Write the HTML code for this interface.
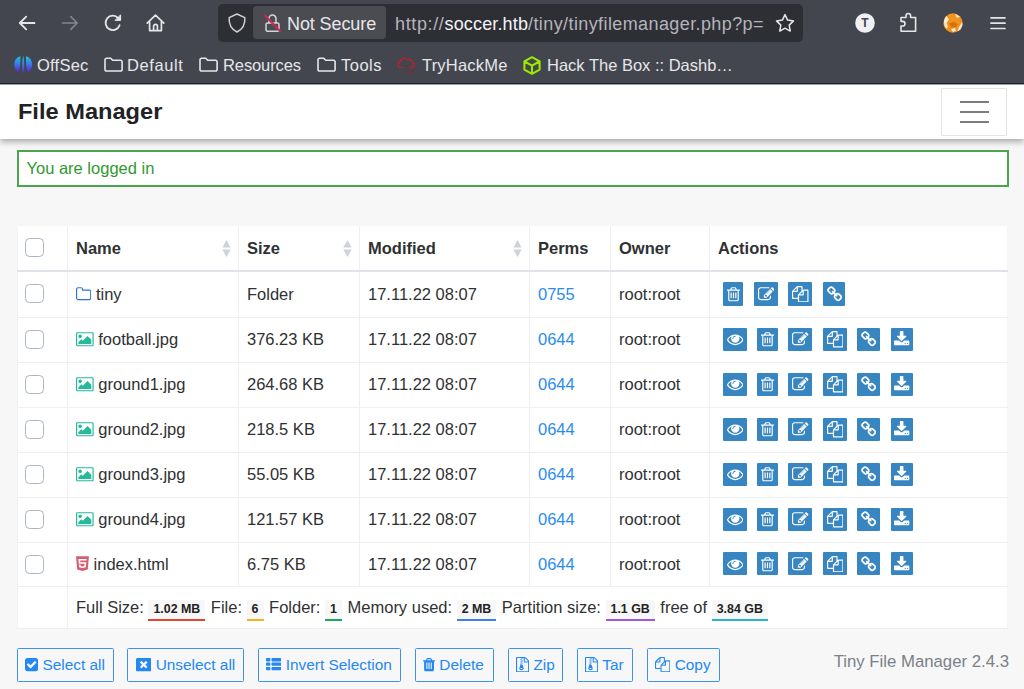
<!DOCTYPE html>
<html lang="en">
<head>
<meta charset="utf-8">
<title>Tiny File Manager</title>
<style>
*{box-sizing:border-box;margin:0;padding:0}
html,body{width:1024px;height:689px;overflow:hidden}
body{position:relative;background:#f7f7f7;font-family:"Liberation Sans",Arial,sans-serif;font-size:15px;color:#303133;line-height:1.5}
/* ---------- browser chrome ---------- */
#chrome{position:absolute;z-index:2;left:0;top:0;width:1024px;height:85px;background:linear-gradient(#43464e 0,#43464e 82.700px,#1e1f24 83.300px,#1e1f24 84.100px,#fff 84.800px);font-family:"Liberation Sans","DejaVu Sans",sans-serif;color:#e6e6ea}
#urlbar{position:absolute;left:218px;top:4px;width:585px;height:38px;border-radius:5px;background:#2e2f35}
#idbox{position:absolute;left:253px;top:6px;width:133px;height:33px;border-radius:4px;background:#4b4c52}
.ct{position:absolute;white-space:nowrap;font-size:18px;line-height:20px}
.bm{position:absolute;top:55px;white-space:nowrap;font-size:16.5px;line-height:20px;color:#e6e6ea}
#chrome svg{position:absolute;overflow:visible}
/* ---------- page ---------- */
#nav{position:absolute;left:0;top:84px;width:1024px;height:55px;background:#fff;box-shadow:0 3px 6px rgba(0,0,0,.31)}
#brand{position:absolute;left:18px;top:13px;font-size:22.4px;transform:scaleX(1.055);transform-origin:1px 50%;font-weight:bold;line-height:30px;color:#222;white-space:nowrap}
#toggler{position:absolute;left:941px;top:4px;width:66px;height:48px;border:1px solid #e4e4e4;border-radius:1px;background:#fff}
#toggler i{position:absolute;left:18px;width:28.5px;height:2px;background:#7c7c7c}
#alert{position:absolute;left:17px;top:150px;width:992px;height:37px;border:2px solid #4ba64b;background:#fff;color:#2f9a2f;font-size:16.5px;line-height:20px;padding:6.200px 0 0 7.5px}
table{position:absolute;left:17px;top:226px;width:991px;border-collapse:collapse;background:#fff;table-layout:fixed}
td,th{border:1px solid #edeff2;padding:0 8px 1px;height:45px;text-align:left;vertical-align:middle;font-size:16.5px;white-space:nowrap;color:#303133}
th{font-size:16.5px;font-weight:bold;border-bottom:2px solid #dfe3e8;height:44px;padding-top:1px;padding-bottom:0;position:relative}
tr td:first-child,tr th:first-child{border-left-color:#f1f2f4}
tr td:last-child,tr th:last-child{border-right-color:#f4f5f6}
thead tr th{border-top-color:#fdfdfd}
a{color:#2b8cf0;text-decoration:none}
.cb{display:block;margin:0 0 0 -1px;width:19px;height:19px;border:1px solid #adb6c3;border-radius:4.5px;background:#fff}
.sort{position:absolute;right:7px;top:12.5px;width:9px;height:17px}
td.act{padding-left:13px}
.act{font-size:0}
.ic{display:inline-block;background:#3785c1;vertical-align:middle;margin-left:10.8px;padding:3.7px 3.6px 3.3px;border-radius:1px;line-height:0;position:relative;top:-.25px}
.ic:first-child{margin-left:0}
.ic svg{display:block}
tr.r1 td{height:47px;padding-top:1px}
tr.r1 .cb{margin-top:-1px}
th .cb{margin-bottom:2px}
tr.r7 td{height:44px}
tfoot td{height:42px;font-size:16.5px;padding-bottom:0;padding-top:2px}
.bdg{display:inline-block;font-size:12.4px;font-weight:bold;line-height:12px;padding:2.5px 5px 4.5px;margin:0 1px 0 0;border-bottom:2px solid #000;background:#f7f7f7;color:#222;vertical-align:-.5px;position:relative;top:-1px;border-radius:2px 2px 0 0}
.btn{position:absolute;top:648px;height:34px;border:1.8px solid #3a92f4;border-radius:1.5px;color:#2388f3;font-size:15.4px;line-height:31px;white-space:nowrap;padding-left:7px;background:#f7f7f7}
#ver{position:absolute;right:15px;top:651.5px;font-size:16.75px;color:#7a8189;white-space:nowrap;line-height:20px}
</style>
</head>
<body>
<div id="chrome">
<div id="urlbar"></div><div id="idbox"></div>
<!-- back -->
<svg style="left:18px;top:14px" width="18" height="18" viewBox="0 0 18 18" fill="none" stroke="#e6e6ea" stroke-width="1.8" stroke-linecap="round" stroke-linejoin="round"><path d="M16.5 9H2M8.2 2.6L1.8 9l6.4 6.4"/></svg>
<!-- forward -->
<svg style="left:61px;top:14px" width="18" height="18" viewBox="0 0 18 18" fill="none" stroke="#85868f" stroke-width="1.6" stroke-linecap="round" stroke-linejoin="round"><path d="M1.5 9H16M9.8 2.6L16.2 9l-6.4 6.4"/></svg>
<!-- reload -->
<svg style="left:104px;top:14px" width="19" height="18" viewBox="0 0 19 18" fill="none" stroke="#e6e6ea" stroke-width="1.8" stroke-linecap="round" stroke-linejoin="round"><path d="M15.6 11.2A7.2 7.2 0 1 1 14.2 4.1"/><path d="M16.6 1.2v5.2h-5.2z" fill="#e6e6ea" stroke-width="1"/></svg>
<!-- home -->
<svg style="left:146px;top:14px" width="19" height="18" viewBox="0 0 19 18" fill="none" stroke="#e6e6ea" stroke-width="1.7" stroke-linecap="round" stroke-linejoin="round"><path d="M1.2 9.2L9.5 1.2l8.3 8M3.6 8v8.6h11.8V8M7.6 16.4v-4.2a1.9 1.9 0 0 1 3.8 0v4.2"/></svg>
<!-- shield -->
<svg style="left:228px;top:13px" width="18" height="20" viewBox="0 0 18 20" fill="none" stroke="#cfcfd4" stroke-width="1.5" stroke-linejoin="round"><path d="M9 1L1.2 4.6c-.5 6.200 1.800 11.400 7.800 14.400c6-3 8.300-8.200 7.800-14.400z"/></svg>
<!-- lock crossed -->
<svg style="left:264px;top:13px" width="17" height="20" viewBox="0 0 17 20" fill="none" stroke="#d4d4d9" stroke-width="1.5" stroke-linejoin="round" stroke-linecap="round"><rect x="2" y="10" width="13" height="8.200" rx="1.500"/><path d="M5 9.800V5.600a3.500 3.500 0 0 1 7 0v4.200"/><path d="M1 2.500L16 18" stroke="#c92a52" stroke-width="2"/></svg>
<span class="ct" style="left:287px;top:14px;letter-spacing:-0.1px">Not Secure</span>
<span class="ct" style="left:395px;top:14px;color:#b4b4bb;letter-spacing:0.64px">http://<span style="color:#f4f4f7;letter-spacing:.15px">soccer.htb</span><span style="letter-spacing:.4px">/tiny/tinyfilemanager.php?p=</span></span>
<!-- star -->
<svg style="left:775px;top:13px" width="20" height="20" viewBox="0 0 20 20" fill="none" stroke="#e6e6ea" stroke-width="1.5" stroke-linejoin="round"><path d="M10 1.600l2.600 5.500 5.900.800-4.300 4.200 1.050 5.950L10 15.200l-5.250 2.850L5.800 12.100 1.500 7.900l5.900-.8z"/></svg>
<!-- T circle -->
<svg style="left:855px;top:13px" width="20" height="20" viewBox="0 0 20 20"><circle cx="10" cy="10" r="9.800" fill="#f0f0f3"/><text x="10" y="14.300" text-anchor="middle" font-family="Liberation Sans, sans-serif" font-weight="bold" font-size="12" fill="#45464e">T</text></svg>
<!-- puzzle -->
<svg style="left:899px;top:12px" width="19" height="21" viewBox="0 0 19 21" fill="none" stroke="#e6e6ea" stroke-width="1.600" stroke-linejoin="round"><path d="M7 5.500V3.800a2.300 2.300 0 0 1 4.600 0v1.700h5v13.700H2V14h1.700a2.300 2.300 0 0 0 0-4.600H2V5.500z" transform="translate(0,0)"/></svg>
<!-- fox avatar -->
<svg style="left:943px;top:13px" width="20" height="20" viewBox="0 0 20 20"><circle cx="10" cy="10" r="9.700" fill="#f0921c"/><path d="M1 9c0-2.500 1-4.500 2.500-6L6 6.500 3.500 10l1.500 4-1.500 1.500C2 14 1 11.500 1 9z" fill="#f7ead8"/><path d="M12 1l5 2.500-3 1.500zM19 9l.5 3-2 4.500-3 2 1.500-4.500z" fill="#f7ead8"/><path d="M6 10.500l5-1.500 4 2.500-2.500 2.500-4 .5z" fill="#d96f0c"/><path d="M8 16l4-1 1 2.500-3 1.500z" fill="#f7ead8"/></svg>
<!-- hamburger -->
<svg style="left:990px;top:16px" width="16" height="14" viewBox="0 0 16 14" stroke="#e6e6ea" stroke-width="1.700" stroke-linecap="round"><path d="M1 1.800h14M1 7.200h14M1 12.500h14"/></svg>
<!-- bookmarks -->
<svg style="left:13.500px;top:55px" width="19" height="21" viewBox="0 0 19 21"><defs><linearGradient id="og" x1="0" y1="0" x2="0" y2="1"><stop offset="0" stop-color="#1fc3e0"/><stop offset=".5" stop-color="#3a78e2"/><stop offset="1" stop-color="#6220dc"/></linearGradient></defs><path d="M6.400 1.200C2.500 2 .3 5.500.3 9.500c0 3.500 1.700 6.500 3.900 7.800 1.600-2.300 2.200-6.300 2.200-10.300z" fill="url(#og)"/><path d="M12 1.200c3.900.8 6.100 4.300 6.100 8.300 0 3.500-1.700 6.500-3.900 7.800C12.600 15 12 11 12 7z" fill="url(#og)"/><path d="M9.200.5c1.100 4.500 1.300 9.500.8 14.500l-.8 4.500-.8-4.500C7.900 10 8.100 5 9.200.5z" fill="url(#og)"/></svg>
<span class="bm" style="left:37px;letter-spacing:0.23px">OffSec</span>
<svg class="fo" style="left:104px;top:57.300px" width="19" height="15" viewBox="0 0 19 15" fill="none" stroke="#e6e6ea" stroke-width="1.600" stroke-linejoin="round"><path d="M1 2.800a1.500 1.500 0 0 1 1.500-1.500h4.300l1.800 2h8a1.500 1.500 0 0 1 1.500 1.500v7.700a1.500 1.500 0 0 1-1.500 1.500H2.500A1.500 1.500 0 0 1 1 12.500z"/></svg>
<span class="bm" style="left:127px;letter-spacing:0.6px">Default</span>
<svg class="fo" style="left:199px;top:57.300px" width="19" height="15" viewBox="0 0 19 15" fill="none" stroke="#e6e6ea" stroke-width="1.600" stroke-linejoin="round"><path d="M1 2.800a1.500 1.500 0 0 1 1.500-1.500h4.300l1.800 2h8a1.500 1.500 0 0 1 1.500 1.500v7.700a1.500 1.500 0 0 1-1.500 1.500H2.500A1.500 1.500 0 0 1 1 12.500z"/></svg>
<span class="bm" style="left:223px;letter-spacing:-0.1px">Resources</span>
<svg class="fo" style="left:317px;top:57.300px" width="19" height="15" viewBox="0 0 19 15" fill="none" stroke="#e6e6ea" stroke-width="1.600" stroke-linejoin="round"><path d="M1 2.800a1.500 1.500 0 0 1 1.500-1.500h4.300l1.800 2h8a1.500 1.500 0 0 1 1.500 1.500v7.700a1.500 1.500 0 0 1-1.500 1.500H2.500A1.500 1.500 0 0 1 1 12.500z"/></svg>
<span class="bm" style="left:341px;letter-spacing:0.5px">Tools</span>
<!-- tryhackme cloud -->
<svg style="left:397px;top:56px" width="20" height="19" viewBox="0 0 20 19" fill="none" stroke="#b3232d" stroke-width="1.500" stroke-linecap="round" stroke-linejoin="round"><path d="M5 11.500H4a3 3 0 0 1-.4-6 3.600 3.600 0 0 1 6.600-1.700 3.300 3.300 0 0 1 5.200 2.500 2.700 2.700 0 0 1-.4 5.200h-1.500"/><path d="M8 10h3M9 12.500h4M11 15h5M13 17.500h4" stroke-width="1.100" stroke="#7d2a30"/></svg>
<span class="bm" style="left:422px;letter-spacing:0.2px">TryHackMe</span>
<!-- htb cube -->
<svg style="left:523px;top:56px" width="18" height="19" viewBox="0 0 18 19" fill="none" stroke="#9bea00" stroke-width="2.100" stroke-linejoin="round"><path d="M9 1.200l7.600 4.200v8.200L9 17.800l-7.600-4.200V5.400zM1.600 5.500L9 9.600l7.400-4.100M9 9.600v8"/></svg>
<span class="bm" style="left:547px;letter-spacing:0px">Hack The Box :: Dashb…</span>
</div>
<div id="nav"><div id="brand">File Manager</div><div id="toggler"><i style="top:12.3px"></i><i style="top:21.900px"></i><i style="top:31.500px"></i></div></div>
<div id="alert">You are logged in</div>
<table>
<colgroup><col style="width:50px"><col style="width:171px"><col style="width:121px"><col style="width:170px"><col style="width:81px"><col style="width:99px"><col></colgroup>
<thead><tr><th><span class="cb"></span></th><th>Name<svg class="sort" viewBox="0 0 9 18"><path d="M4.500 0L9 8H0z" fill="#cfd2d6"/><path d="M4.500 18L9 10H0z" fill="#cfd2d6"/></svg></th><th>Size<svg class="sort" viewBox="0 0 9 18"><path d="M4.500 0L9 8H0z" fill="#cfd2d6"/><path d="M4.500 18L9 10H0z" fill="#cfd2d6"/></svg></th><th>Modified<svg class="sort" viewBox="0 0 9 18"><path d="M4.500 0L9 8H0z" fill="#cfd2d6"/><path d="M4.500 18L9 10H0z" fill="#cfd2d6"/></svg></th><th>Perms</th><th>Owner</th><th>Actions</th></tr></thead>
<tbody>
<tr class="r1"><td><span class="cb"></span></td><td><svg class="fa" width="15.32" height="16.5" viewBox="0 -1536 1664 1792" style="vertical-align:-2.36px"><path fill="#2a74cf" transform="scale(1,-1)" d="M1536 224V928Q1536 968 1508.0 996.0Q1480 1024 1440 1024H736Q696 1024 668.0 1052.0Q640 1080 640 1120V1184Q640 1224 612.0 1252.0Q584 1280 544 1280H224Q184 1280 156.0 1252.0Q128 1224 128 1184V224Q128 184 156.0 156.0Q184 128 224 128H1440Q1480 128 1508.0 156.0Q1536 184 1536 224ZM1664 928V224Q1664 132 1598.0 66.0Q1532 0 1440 0H224Q132 0 66.0 66.0Q0 132 0 224V1184Q0 1276 66.0 1342.0Q132 1408 224 1408H544Q636 1408 702.0 1342.0Q768 1276 768 1184V1152H1440Q1532 1152 1598.0 1086.0Q1664 1020 1664 928Z"/></svg> tiny</td><td>Folder</td><td>17.11.22 08:07</td><td><a>0755</a></td><td>root:root</td><td class="act"><span class="ic"><svg class="fa" width="12.96" height="16.5" viewBox="0 -1536 1408 1792" style=""><path fill="#fff" transform="scale(1,-1)" d="M512 800V224Q512 210 503.0 201.0Q494 192 480 192H416Q402 192 393.0 201.0Q384 210 384 224V800Q384 814 393.0 823.0Q402 832 416 832H480Q494 832 503.0 823.0Q512 814 512 800ZM768 800V224Q768 210 759.0 201.0Q750 192 736 192H672Q658 192 649.0 201.0Q640 210 640 224V800Q640 814 649.0 823.0Q658 832 672 832H736Q750 832 759.0 823.0Q768 814 768 800ZM1024 800V224Q1024 210 1015.0 201.0Q1006 192 992 192H928Q914 192 905.0 201.0Q896 210 896 224V800Q896 814 905.0 823.0Q914 832 928 832H992Q1006 832 1015.0 823.0Q1024 814 1024 800ZM1152 76V1024H256V76Q256 54 263.0 35.5Q270 17 277.5 8.5Q285 0 288 0H1120Q1123 0 1130.5 8.5Q1138 17 1145.0 35.5Q1152 54 1152 76ZM480 1152H928L880 1269Q873 1278 863 1280H546Q536 1278 529 1269ZM1408 1120V1056Q1408 1042 1399.0 1033.0Q1390 1024 1376 1024H1280V76Q1280 -7 1233.0 -67.5Q1186 -128 1120 -128H288Q222 -128 175.0 -69.5Q128 -11 128 72V1024H32Q18 1024 9.0 1033.0Q0 1042 0 1056V1120Q0 1134 9.0 1143.0Q18 1152 32 1152H341L411 1319Q426 1356 465.0 1382.0Q504 1408 544 1408H864Q904 1408 943.0 1382.0Q982 1356 997 1319L1067 1152H1376Q1390 1152 1399.0 1143.0Q1408 1134 1408 1120Z"/></svg></span><span class="ic"><svg class="fa" width="16.50" height="16.5" viewBox="0 -1536 1792 1792" style=""><path fill="#fff" transform="scale(1,-1)" d="M888 352 1004 468 852 620 736 504V448H832V352ZM1295 1071 945 721Q928 704 944.0 688.0Q960 672 977 689L1327 1039Q1344 1056 1328.0 1072.0Q1312 1088 1295 1071ZM1408 478V288Q1408 169 1323.5 84.5Q1239 0 1120 0H288Q169 0 84.5 84.5Q0 169 0 288V1120Q0 1239 84.5 1323.5Q169 1408 288 1408H1120Q1183 1408 1237 1383Q1252 1376 1255 1360Q1258 1343 1246 1331L1197 1282Q1183 1268 1165 1274Q1142 1280 1120 1280H288Q222 1280 175.0 1233.0Q128 1186 128 1120V288Q128 222 175.0 175.0Q222 128 288 128H1120Q1186 128 1233.0 175.0Q1280 222 1280 288V414Q1280 427 1289 436L1353 500Q1368 515 1388.0 507.0Q1408 499 1408 478ZM1312 1216 1600 928 928 256H640V544ZM1756 1084 1664 992 1376 1280 1468 1372Q1496 1400 1536.0 1400.0Q1576 1400 1604 1372L1756 1220Q1784 1192 1784.0 1152.0Q1784 1112 1756 1084Z"/></svg></span><span class="ic"><svg class="fa" width="16.50" height="16.5" viewBox="0 -1536 1792 1792" style=""><path fill="#fff" transform="scale(1,-1)" d="M1696 1152Q1736 1152 1764.0 1124.0Q1792 1096 1792 1056V-160Q1792 -200 1764.0 -228.0Q1736 -256 1696 -256H736Q696 -256 668.0 -228.0Q640 -200 640 -160V128H96Q56 128 28.0 156.0Q0 184 0 224V896Q0 936 20.0 984.0Q40 1032 68 1060L476 1468Q504 1496 552.0 1516.0Q600 1536 640 1536H1056Q1096 1536 1124.0 1508.0Q1152 1480 1152 1440V1112Q1220 1152 1280 1152ZM1152 939 853 640H1152ZM512 1323 213 1024H512ZM708 676 1024 992V1408H640V992Q640 952 612.0 924.0Q584 896 544 896H128V256H640V512Q640 552 660.0 600.0Q680 648 708 676ZM1664 -128V1024H1280V608Q1280 568 1252.0 540.0Q1224 512 1184 512H768V-128Z"/></svg></span><span class="ic"><svg class="fa" width="15.32" height="16.5" viewBox="0 -1536 1664 1792" style=""><path fill="#fff" transform="scale(1,-1)" d="M1456 320Q1456 360 1428 388L1220 596Q1192 624 1152 624Q1110 624 1080 592Q1083 589 1099.0 573.5Q1115 558 1120.5 552.0Q1126 546 1135.5 533.0Q1145 520 1148.5 507.5Q1152 495 1152 480Q1152 440 1124.0 412.0Q1096 384 1056 384Q1041 384 1028.5 387.5Q1016 391 1003.0 400.5Q990 410 984.0 415.5Q978 421 962.5 437.0Q947 453 944 456Q911 425 911 383Q911 343 939 315L1145 108Q1172 81 1213 81Q1253 81 1281 107L1428 253Q1456 281 1456 320ZM753 1025Q753 1065 725 1093L519 1300Q491 1328 451 1328Q412 1328 383 1301L236 1155Q208 1127 208 1088Q208 1048 236 1020L444 812Q471 785 512 785Q554 785 584 816Q581 819 565.0 834.5Q549 850 543.5 856.0Q538 862 528.5 875.0Q519 888 515.5 900.5Q512 913 512 928Q512 968 540.0 996.0Q568 1024 608 1024Q623 1024 635.5 1020.5Q648 1017 661.0 1007.5Q674 998 680.0 992.5Q686 987 701.5 971.0Q717 955 720 952Q753 983 753 1025ZM1563 117 1416 -29Q1333 -112 1213 -112Q1092 -112 1009 -27L803 180Q720 263 720 383Q720 506 808 592L720 680Q634 592 512 592Q392 592 308 676L100 884Q16 968 16.0 1088.0Q16 1208 101 1291L248 1437Q331 1520 451 1520Q572 1520 655 1435L861 1228Q944 1145 944 1025Q944 902 856 816L944 728Q1030 816 1152 816Q1272 816 1356 732L1564 524Q1648 440 1648.0 320.0Q1648 200 1563 117Z"/></svg></span></td></tr>
<tr><td><span class="cb"></span></td><td><svg class="fa" width="17.68" height="16.5" viewBox="0 -1536 1920 1792" style="vertical-align:-2.36px"><path fill="#26b99a" transform="scale(1,-1)" d="M584.0 1096.0Q640 1040 640.0 960.0Q640 880 584.0 824.0Q528 768 448.0 768.0Q368 768 312.0 824.0Q256 880 256.0 960.0Q256 1040 312.0 1096.0Q368 1152 448.0 1152.0Q528 1152 584.0 1096.0ZM1664 576V128H256V320L576 640L736 480L1248 992ZM1760 1280H160Q147 1280 137.5 1270.5Q128 1261 128 1248V32Q128 19 137.5 9.5Q147 0 160 0H1760Q1773 0 1782.5 9.5Q1792 19 1792 32V1248Q1792 1261 1782.5 1270.5Q1773 1280 1760 1280ZM1920 1248V32Q1920 -34 1873.0 -81.0Q1826 -128 1760 -128H160Q94 -128 47.0 -81.0Q0 -34 0 32V1248Q0 1314 47.0 1361.0Q94 1408 160 1408H1760Q1826 1408 1873.0 1361.0Q1920 1314 1920 1248Z"/></svg> football.jpg</td><td>376.23 KB</td><td>17.11.22 08:07</td><td><a>0644</a></td><td>root:root</td><td class="act"><span class="ic"><svg class="fa" width="16.50" height="16.5" viewBox="0 -1536 1792 1792" style=""><path fill="#fff" transform="scale(1,-1)" d="M1664 576Q1512 812 1283 929Q1344 825 1344 704Q1344 519 1212.5 387.5Q1081 256 896.0 256.0Q711 256 579.5 387.5Q448 519 448 704Q448 825 509 929Q280 812 128 576Q261 371 461.5 249.5Q662 128 896.0 128.0Q1130 128 1330.5 249.5Q1531 371 1664 576ZM896 1008Q771 1008 681.5 918.5Q592 829 592 704Q592 684 606.0 670.0Q620 656 640.0 656.0Q660 656 674.0 670.0Q688 684 688 704Q688 790 749.0 851.0Q810 912 896 912Q916 912 930.0 926.0Q944 940 944.0 960.0Q944 980 930.0 994.0Q916 1008 896 1008ZM1772 507Q1632 277 1395.5 138.5Q1159 0 896.0 0.0Q633 0 396.5 139.0Q160 278 20 507Q0 542 0.0 576.0Q0 610 20 645Q160 874 396.5 1013.0Q633 1152 896.0 1152.0Q1159 1152 1395.5 1013.0Q1632 874 1772 645Q1792 610 1792.0 576.0Q1792 542 1772 507Z"/></svg></span><span class="ic"><svg class="fa" width="12.96" height="16.5" viewBox="0 -1536 1408 1792" style=""><path fill="#fff" transform="scale(1,-1)" d="M512 800V224Q512 210 503.0 201.0Q494 192 480 192H416Q402 192 393.0 201.0Q384 210 384 224V800Q384 814 393.0 823.0Q402 832 416 832H480Q494 832 503.0 823.0Q512 814 512 800ZM768 800V224Q768 210 759.0 201.0Q750 192 736 192H672Q658 192 649.0 201.0Q640 210 640 224V800Q640 814 649.0 823.0Q658 832 672 832H736Q750 832 759.0 823.0Q768 814 768 800ZM1024 800V224Q1024 210 1015.0 201.0Q1006 192 992 192H928Q914 192 905.0 201.0Q896 210 896 224V800Q896 814 905.0 823.0Q914 832 928 832H992Q1006 832 1015.0 823.0Q1024 814 1024 800ZM1152 76V1024H256V76Q256 54 263.0 35.5Q270 17 277.5 8.5Q285 0 288 0H1120Q1123 0 1130.5 8.5Q1138 17 1145.0 35.5Q1152 54 1152 76ZM480 1152H928L880 1269Q873 1278 863 1280H546Q536 1278 529 1269ZM1408 1120V1056Q1408 1042 1399.0 1033.0Q1390 1024 1376 1024H1280V76Q1280 -7 1233.0 -67.5Q1186 -128 1120 -128H288Q222 -128 175.0 -69.5Q128 -11 128 72V1024H32Q18 1024 9.0 1033.0Q0 1042 0 1056V1120Q0 1134 9.0 1143.0Q18 1152 32 1152H341L411 1319Q426 1356 465.0 1382.0Q504 1408 544 1408H864Q904 1408 943.0 1382.0Q982 1356 997 1319L1067 1152H1376Q1390 1152 1399.0 1143.0Q1408 1134 1408 1120Z"/></svg></span><span class="ic"><svg class="fa" width="16.50" height="16.5" viewBox="0 -1536 1792 1792" style=""><path fill="#fff" transform="scale(1,-1)" d="M888 352 1004 468 852 620 736 504V448H832V352ZM1295 1071 945 721Q928 704 944.0 688.0Q960 672 977 689L1327 1039Q1344 1056 1328.0 1072.0Q1312 1088 1295 1071ZM1408 478V288Q1408 169 1323.5 84.5Q1239 0 1120 0H288Q169 0 84.5 84.5Q0 169 0 288V1120Q0 1239 84.5 1323.5Q169 1408 288 1408H1120Q1183 1408 1237 1383Q1252 1376 1255 1360Q1258 1343 1246 1331L1197 1282Q1183 1268 1165 1274Q1142 1280 1120 1280H288Q222 1280 175.0 1233.0Q128 1186 128 1120V288Q128 222 175.0 175.0Q222 128 288 128H1120Q1186 128 1233.0 175.0Q1280 222 1280 288V414Q1280 427 1289 436L1353 500Q1368 515 1388.0 507.0Q1408 499 1408 478ZM1312 1216 1600 928 928 256H640V544ZM1756 1084 1664 992 1376 1280 1468 1372Q1496 1400 1536.0 1400.0Q1576 1400 1604 1372L1756 1220Q1784 1192 1784.0 1152.0Q1784 1112 1756 1084Z"/></svg></span><span class="ic"><svg class="fa" width="16.50" height="16.5" viewBox="0 -1536 1792 1792" style=""><path fill="#fff" transform="scale(1,-1)" d="M1696 1152Q1736 1152 1764.0 1124.0Q1792 1096 1792 1056V-160Q1792 -200 1764.0 -228.0Q1736 -256 1696 -256H736Q696 -256 668.0 -228.0Q640 -200 640 -160V128H96Q56 128 28.0 156.0Q0 184 0 224V896Q0 936 20.0 984.0Q40 1032 68 1060L476 1468Q504 1496 552.0 1516.0Q600 1536 640 1536H1056Q1096 1536 1124.0 1508.0Q1152 1480 1152 1440V1112Q1220 1152 1280 1152ZM1152 939 853 640H1152ZM512 1323 213 1024H512ZM708 676 1024 992V1408H640V992Q640 952 612.0 924.0Q584 896 544 896H128V256H640V512Q640 552 660.0 600.0Q680 648 708 676ZM1664 -128V1024H1280V608Q1280 568 1252.0 540.0Q1224 512 1184 512H768V-128Z"/></svg></span><span class="ic"><svg class="fa" width="15.32" height="16.5" viewBox="0 -1536 1664 1792" style=""><path fill="#fff" transform="scale(1,-1)" d="M1456 320Q1456 360 1428 388L1220 596Q1192 624 1152 624Q1110 624 1080 592Q1083 589 1099.0 573.5Q1115 558 1120.5 552.0Q1126 546 1135.5 533.0Q1145 520 1148.5 507.5Q1152 495 1152 480Q1152 440 1124.0 412.0Q1096 384 1056 384Q1041 384 1028.5 387.5Q1016 391 1003.0 400.5Q990 410 984.0 415.5Q978 421 962.5 437.0Q947 453 944 456Q911 425 911 383Q911 343 939 315L1145 108Q1172 81 1213 81Q1253 81 1281 107L1428 253Q1456 281 1456 320ZM753 1025Q753 1065 725 1093L519 1300Q491 1328 451 1328Q412 1328 383 1301L236 1155Q208 1127 208 1088Q208 1048 236 1020L444 812Q471 785 512 785Q554 785 584 816Q581 819 565.0 834.5Q549 850 543.5 856.0Q538 862 528.5 875.0Q519 888 515.5 900.5Q512 913 512 928Q512 968 540.0 996.0Q568 1024 608 1024Q623 1024 635.5 1020.5Q648 1017 661.0 1007.5Q674 998 680.0 992.5Q686 987 701.5 971.0Q717 955 720 952Q753 983 753 1025ZM1563 117 1416 -29Q1333 -112 1213 -112Q1092 -112 1009 -27L803 180Q720 263 720 383Q720 506 808 592L720 680Q634 592 512 592Q392 592 308 676L100 884Q16 968 16.0 1088.0Q16 1208 101 1291L248 1437Q331 1520 451 1520Q572 1520 655 1435L861 1228Q944 1145 944 1025Q944 902 856 816L944 728Q1030 816 1152 816Q1272 816 1356 732L1564 524Q1648 440 1648.0 320.0Q1648 200 1563 117Z"/></svg></span><span class="ic"><svg class="fa" width="15.32" height="16.5" viewBox="0 -1536 1664 1792" style=""><path fill="#fff" transform="scale(1,-1)" d="M1261.0 147.0Q1280 166 1280.0 192.0Q1280 218 1261.0 237.0Q1242 256 1216.0 256.0Q1190 256 1171.0 237.0Q1152 218 1152.0 192.0Q1152 166 1171.0 147.0Q1190 128 1216.0 128.0Q1242 128 1261.0 147.0ZM1517.0 147.0Q1536 166 1536.0 192.0Q1536 218 1517.0 237.0Q1498 256 1472.0 256.0Q1446 256 1427.0 237.0Q1408 218 1408.0 192.0Q1408 166 1427.0 147.0Q1446 128 1472.0 128.0Q1498 128 1517.0 147.0ZM1664 416V96Q1664 56 1636.0 28.0Q1608 0 1568 0H96Q56 0 28.0 28.0Q0 56 0 96V416Q0 456 28.0 484.0Q56 512 96 512H561L696 376Q754 320 832.0 320.0Q910 320 968 376L1104 512H1568Q1608 512 1636.0 484.0Q1664 456 1664 416ZM1339 985Q1356 944 1325 915L877 467Q859 448 832.0 448.0Q805 448 787 467L339 915Q308 944 325 985Q342 1024 384 1024H640V1472Q640 1498 659.0 1517.0Q678 1536 704 1536H960Q986 1536 1005.0 1517.0Q1024 1498 1024 1472V1024H1280Q1322 1024 1339 985Z"/></svg></span></td></tr>
<tr><td><span class="cb"></span></td><td><svg class="fa" width="17.68" height="16.5" viewBox="0 -1536 1920 1792" style="vertical-align:-2.36px"><path fill="#26b99a" transform="scale(1,-1)" d="M584.0 1096.0Q640 1040 640.0 960.0Q640 880 584.0 824.0Q528 768 448.0 768.0Q368 768 312.0 824.0Q256 880 256.0 960.0Q256 1040 312.0 1096.0Q368 1152 448.0 1152.0Q528 1152 584.0 1096.0ZM1664 576V128H256V320L576 640L736 480L1248 992ZM1760 1280H160Q147 1280 137.5 1270.5Q128 1261 128 1248V32Q128 19 137.5 9.5Q147 0 160 0H1760Q1773 0 1782.5 9.5Q1792 19 1792 32V1248Q1792 1261 1782.5 1270.5Q1773 1280 1760 1280ZM1920 1248V32Q1920 -34 1873.0 -81.0Q1826 -128 1760 -128H160Q94 -128 47.0 -81.0Q0 -34 0 32V1248Q0 1314 47.0 1361.0Q94 1408 160 1408H1760Q1826 1408 1873.0 1361.0Q1920 1314 1920 1248Z"/></svg> ground1.jpg</td><td>264.68 KB</td><td>17.11.22 08:07</td><td><a>0644</a></td><td>root:root</td><td class="act"><span class="ic"><svg class="fa" width="16.50" height="16.5" viewBox="0 -1536 1792 1792" style=""><path fill="#fff" transform="scale(1,-1)" d="M1664 576Q1512 812 1283 929Q1344 825 1344 704Q1344 519 1212.5 387.5Q1081 256 896.0 256.0Q711 256 579.5 387.5Q448 519 448 704Q448 825 509 929Q280 812 128 576Q261 371 461.5 249.5Q662 128 896.0 128.0Q1130 128 1330.5 249.5Q1531 371 1664 576ZM896 1008Q771 1008 681.5 918.5Q592 829 592 704Q592 684 606.0 670.0Q620 656 640.0 656.0Q660 656 674.0 670.0Q688 684 688 704Q688 790 749.0 851.0Q810 912 896 912Q916 912 930.0 926.0Q944 940 944.0 960.0Q944 980 930.0 994.0Q916 1008 896 1008ZM1772 507Q1632 277 1395.5 138.5Q1159 0 896.0 0.0Q633 0 396.5 139.0Q160 278 20 507Q0 542 0.0 576.0Q0 610 20 645Q160 874 396.5 1013.0Q633 1152 896.0 1152.0Q1159 1152 1395.5 1013.0Q1632 874 1772 645Q1792 610 1792.0 576.0Q1792 542 1772 507Z"/></svg></span><span class="ic"><svg class="fa" width="12.96" height="16.5" viewBox="0 -1536 1408 1792" style=""><path fill="#fff" transform="scale(1,-1)" d="M512 800V224Q512 210 503.0 201.0Q494 192 480 192H416Q402 192 393.0 201.0Q384 210 384 224V800Q384 814 393.0 823.0Q402 832 416 832H480Q494 832 503.0 823.0Q512 814 512 800ZM768 800V224Q768 210 759.0 201.0Q750 192 736 192H672Q658 192 649.0 201.0Q640 210 640 224V800Q640 814 649.0 823.0Q658 832 672 832H736Q750 832 759.0 823.0Q768 814 768 800ZM1024 800V224Q1024 210 1015.0 201.0Q1006 192 992 192H928Q914 192 905.0 201.0Q896 210 896 224V800Q896 814 905.0 823.0Q914 832 928 832H992Q1006 832 1015.0 823.0Q1024 814 1024 800ZM1152 76V1024H256V76Q256 54 263.0 35.5Q270 17 277.5 8.5Q285 0 288 0H1120Q1123 0 1130.5 8.5Q1138 17 1145.0 35.5Q1152 54 1152 76ZM480 1152H928L880 1269Q873 1278 863 1280H546Q536 1278 529 1269ZM1408 1120V1056Q1408 1042 1399.0 1033.0Q1390 1024 1376 1024H1280V76Q1280 -7 1233.0 -67.5Q1186 -128 1120 -128H288Q222 -128 175.0 -69.5Q128 -11 128 72V1024H32Q18 1024 9.0 1033.0Q0 1042 0 1056V1120Q0 1134 9.0 1143.0Q18 1152 32 1152H341L411 1319Q426 1356 465.0 1382.0Q504 1408 544 1408H864Q904 1408 943.0 1382.0Q982 1356 997 1319L1067 1152H1376Q1390 1152 1399.0 1143.0Q1408 1134 1408 1120Z"/></svg></span><span class="ic"><svg class="fa" width="16.50" height="16.5" viewBox="0 -1536 1792 1792" style=""><path fill="#fff" transform="scale(1,-1)" d="M888 352 1004 468 852 620 736 504V448H832V352ZM1295 1071 945 721Q928 704 944.0 688.0Q960 672 977 689L1327 1039Q1344 1056 1328.0 1072.0Q1312 1088 1295 1071ZM1408 478V288Q1408 169 1323.5 84.5Q1239 0 1120 0H288Q169 0 84.5 84.5Q0 169 0 288V1120Q0 1239 84.5 1323.5Q169 1408 288 1408H1120Q1183 1408 1237 1383Q1252 1376 1255 1360Q1258 1343 1246 1331L1197 1282Q1183 1268 1165 1274Q1142 1280 1120 1280H288Q222 1280 175.0 1233.0Q128 1186 128 1120V288Q128 222 175.0 175.0Q222 128 288 128H1120Q1186 128 1233.0 175.0Q1280 222 1280 288V414Q1280 427 1289 436L1353 500Q1368 515 1388.0 507.0Q1408 499 1408 478ZM1312 1216 1600 928 928 256H640V544ZM1756 1084 1664 992 1376 1280 1468 1372Q1496 1400 1536.0 1400.0Q1576 1400 1604 1372L1756 1220Q1784 1192 1784.0 1152.0Q1784 1112 1756 1084Z"/></svg></span><span class="ic"><svg class="fa" width="16.50" height="16.5" viewBox="0 -1536 1792 1792" style=""><path fill="#fff" transform="scale(1,-1)" d="M1696 1152Q1736 1152 1764.0 1124.0Q1792 1096 1792 1056V-160Q1792 -200 1764.0 -228.0Q1736 -256 1696 -256H736Q696 -256 668.0 -228.0Q640 -200 640 -160V128H96Q56 128 28.0 156.0Q0 184 0 224V896Q0 936 20.0 984.0Q40 1032 68 1060L476 1468Q504 1496 552.0 1516.0Q600 1536 640 1536H1056Q1096 1536 1124.0 1508.0Q1152 1480 1152 1440V1112Q1220 1152 1280 1152ZM1152 939 853 640H1152ZM512 1323 213 1024H512ZM708 676 1024 992V1408H640V992Q640 952 612.0 924.0Q584 896 544 896H128V256H640V512Q640 552 660.0 600.0Q680 648 708 676ZM1664 -128V1024H1280V608Q1280 568 1252.0 540.0Q1224 512 1184 512H768V-128Z"/></svg></span><span class="ic"><svg class="fa" width="15.32" height="16.5" viewBox="0 -1536 1664 1792" style=""><path fill="#fff" transform="scale(1,-1)" d="M1456 320Q1456 360 1428 388L1220 596Q1192 624 1152 624Q1110 624 1080 592Q1083 589 1099.0 573.5Q1115 558 1120.5 552.0Q1126 546 1135.5 533.0Q1145 520 1148.5 507.5Q1152 495 1152 480Q1152 440 1124.0 412.0Q1096 384 1056 384Q1041 384 1028.5 387.5Q1016 391 1003.0 400.5Q990 410 984.0 415.5Q978 421 962.5 437.0Q947 453 944 456Q911 425 911 383Q911 343 939 315L1145 108Q1172 81 1213 81Q1253 81 1281 107L1428 253Q1456 281 1456 320ZM753 1025Q753 1065 725 1093L519 1300Q491 1328 451 1328Q412 1328 383 1301L236 1155Q208 1127 208 1088Q208 1048 236 1020L444 812Q471 785 512 785Q554 785 584 816Q581 819 565.0 834.5Q549 850 543.5 856.0Q538 862 528.5 875.0Q519 888 515.5 900.5Q512 913 512 928Q512 968 540.0 996.0Q568 1024 608 1024Q623 1024 635.5 1020.5Q648 1017 661.0 1007.5Q674 998 680.0 992.5Q686 987 701.5 971.0Q717 955 720 952Q753 983 753 1025ZM1563 117 1416 -29Q1333 -112 1213 -112Q1092 -112 1009 -27L803 180Q720 263 720 383Q720 506 808 592L720 680Q634 592 512 592Q392 592 308 676L100 884Q16 968 16.0 1088.0Q16 1208 101 1291L248 1437Q331 1520 451 1520Q572 1520 655 1435L861 1228Q944 1145 944 1025Q944 902 856 816L944 728Q1030 816 1152 816Q1272 816 1356 732L1564 524Q1648 440 1648.0 320.0Q1648 200 1563 117Z"/></svg></span><span class="ic"><svg class="fa" width="15.32" height="16.5" viewBox="0 -1536 1664 1792" style=""><path fill="#fff" transform="scale(1,-1)" d="M1261.0 147.0Q1280 166 1280.0 192.0Q1280 218 1261.0 237.0Q1242 256 1216.0 256.0Q1190 256 1171.0 237.0Q1152 218 1152.0 192.0Q1152 166 1171.0 147.0Q1190 128 1216.0 128.0Q1242 128 1261.0 147.0ZM1517.0 147.0Q1536 166 1536.0 192.0Q1536 218 1517.0 237.0Q1498 256 1472.0 256.0Q1446 256 1427.0 237.0Q1408 218 1408.0 192.0Q1408 166 1427.0 147.0Q1446 128 1472.0 128.0Q1498 128 1517.0 147.0ZM1664 416V96Q1664 56 1636.0 28.0Q1608 0 1568 0H96Q56 0 28.0 28.0Q0 56 0 96V416Q0 456 28.0 484.0Q56 512 96 512H561L696 376Q754 320 832.0 320.0Q910 320 968 376L1104 512H1568Q1608 512 1636.0 484.0Q1664 456 1664 416ZM1339 985Q1356 944 1325 915L877 467Q859 448 832.0 448.0Q805 448 787 467L339 915Q308 944 325 985Q342 1024 384 1024H640V1472Q640 1498 659.0 1517.0Q678 1536 704 1536H960Q986 1536 1005.0 1517.0Q1024 1498 1024 1472V1024H1280Q1322 1024 1339 985Z"/></svg></span></td></tr>
<tr><td><span class="cb"></span></td><td><svg class="fa" width="17.68" height="16.5" viewBox="0 -1536 1920 1792" style="vertical-align:-2.36px"><path fill="#26b99a" transform="scale(1,-1)" d="M584.0 1096.0Q640 1040 640.0 960.0Q640 880 584.0 824.0Q528 768 448.0 768.0Q368 768 312.0 824.0Q256 880 256.0 960.0Q256 1040 312.0 1096.0Q368 1152 448.0 1152.0Q528 1152 584.0 1096.0ZM1664 576V128H256V320L576 640L736 480L1248 992ZM1760 1280H160Q147 1280 137.5 1270.5Q128 1261 128 1248V32Q128 19 137.5 9.5Q147 0 160 0H1760Q1773 0 1782.5 9.5Q1792 19 1792 32V1248Q1792 1261 1782.5 1270.5Q1773 1280 1760 1280ZM1920 1248V32Q1920 -34 1873.0 -81.0Q1826 -128 1760 -128H160Q94 -128 47.0 -81.0Q0 -34 0 32V1248Q0 1314 47.0 1361.0Q94 1408 160 1408H1760Q1826 1408 1873.0 1361.0Q1920 1314 1920 1248Z"/></svg> ground2.jpg</td><td>218.5 KB</td><td>17.11.22 08:07</td><td><a>0644</a></td><td>root:root</td><td class="act"><span class="ic"><svg class="fa" width="16.50" height="16.5" viewBox="0 -1536 1792 1792" style=""><path fill="#fff" transform="scale(1,-1)" d="M1664 576Q1512 812 1283 929Q1344 825 1344 704Q1344 519 1212.5 387.5Q1081 256 896.0 256.0Q711 256 579.5 387.5Q448 519 448 704Q448 825 509 929Q280 812 128 576Q261 371 461.5 249.5Q662 128 896.0 128.0Q1130 128 1330.5 249.5Q1531 371 1664 576ZM896 1008Q771 1008 681.5 918.5Q592 829 592 704Q592 684 606.0 670.0Q620 656 640.0 656.0Q660 656 674.0 670.0Q688 684 688 704Q688 790 749.0 851.0Q810 912 896 912Q916 912 930.0 926.0Q944 940 944.0 960.0Q944 980 930.0 994.0Q916 1008 896 1008ZM1772 507Q1632 277 1395.5 138.5Q1159 0 896.0 0.0Q633 0 396.5 139.0Q160 278 20 507Q0 542 0.0 576.0Q0 610 20 645Q160 874 396.5 1013.0Q633 1152 896.0 1152.0Q1159 1152 1395.5 1013.0Q1632 874 1772 645Q1792 610 1792.0 576.0Q1792 542 1772 507Z"/></svg></span><span class="ic"><svg class="fa" width="12.96" height="16.5" viewBox="0 -1536 1408 1792" style=""><path fill="#fff" transform="scale(1,-1)" d="M512 800V224Q512 210 503.0 201.0Q494 192 480 192H416Q402 192 393.0 201.0Q384 210 384 224V800Q384 814 393.0 823.0Q402 832 416 832H480Q494 832 503.0 823.0Q512 814 512 800ZM768 800V224Q768 210 759.0 201.0Q750 192 736 192H672Q658 192 649.0 201.0Q640 210 640 224V800Q640 814 649.0 823.0Q658 832 672 832H736Q750 832 759.0 823.0Q768 814 768 800ZM1024 800V224Q1024 210 1015.0 201.0Q1006 192 992 192H928Q914 192 905.0 201.0Q896 210 896 224V800Q896 814 905.0 823.0Q914 832 928 832H992Q1006 832 1015.0 823.0Q1024 814 1024 800ZM1152 76V1024H256V76Q256 54 263.0 35.5Q270 17 277.5 8.5Q285 0 288 0H1120Q1123 0 1130.5 8.5Q1138 17 1145.0 35.5Q1152 54 1152 76ZM480 1152H928L880 1269Q873 1278 863 1280H546Q536 1278 529 1269ZM1408 1120V1056Q1408 1042 1399.0 1033.0Q1390 1024 1376 1024H1280V76Q1280 -7 1233.0 -67.5Q1186 -128 1120 -128H288Q222 -128 175.0 -69.5Q128 -11 128 72V1024H32Q18 1024 9.0 1033.0Q0 1042 0 1056V1120Q0 1134 9.0 1143.0Q18 1152 32 1152H341L411 1319Q426 1356 465.0 1382.0Q504 1408 544 1408H864Q904 1408 943.0 1382.0Q982 1356 997 1319L1067 1152H1376Q1390 1152 1399.0 1143.0Q1408 1134 1408 1120Z"/></svg></span><span class="ic"><svg class="fa" width="16.50" height="16.5" viewBox="0 -1536 1792 1792" style=""><path fill="#fff" transform="scale(1,-1)" d="M888 352 1004 468 852 620 736 504V448H832V352ZM1295 1071 945 721Q928 704 944.0 688.0Q960 672 977 689L1327 1039Q1344 1056 1328.0 1072.0Q1312 1088 1295 1071ZM1408 478V288Q1408 169 1323.5 84.5Q1239 0 1120 0H288Q169 0 84.5 84.5Q0 169 0 288V1120Q0 1239 84.5 1323.5Q169 1408 288 1408H1120Q1183 1408 1237 1383Q1252 1376 1255 1360Q1258 1343 1246 1331L1197 1282Q1183 1268 1165 1274Q1142 1280 1120 1280H288Q222 1280 175.0 1233.0Q128 1186 128 1120V288Q128 222 175.0 175.0Q222 128 288 128H1120Q1186 128 1233.0 175.0Q1280 222 1280 288V414Q1280 427 1289 436L1353 500Q1368 515 1388.0 507.0Q1408 499 1408 478ZM1312 1216 1600 928 928 256H640V544ZM1756 1084 1664 992 1376 1280 1468 1372Q1496 1400 1536.0 1400.0Q1576 1400 1604 1372L1756 1220Q1784 1192 1784.0 1152.0Q1784 1112 1756 1084Z"/></svg></span><span class="ic"><svg class="fa" width="16.50" height="16.5" viewBox="0 -1536 1792 1792" style=""><path fill="#fff" transform="scale(1,-1)" d="M1696 1152Q1736 1152 1764.0 1124.0Q1792 1096 1792 1056V-160Q1792 -200 1764.0 -228.0Q1736 -256 1696 -256H736Q696 -256 668.0 -228.0Q640 -200 640 -160V128H96Q56 128 28.0 156.0Q0 184 0 224V896Q0 936 20.0 984.0Q40 1032 68 1060L476 1468Q504 1496 552.0 1516.0Q600 1536 640 1536H1056Q1096 1536 1124.0 1508.0Q1152 1480 1152 1440V1112Q1220 1152 1280 1152ZM1152 939 853 640H1152ZM512 1323 213 1024H512ZM708 676 1024 992V1408H640V992Q640 952 612.0 924.0Q584 896 544 896H128V256H640V512Q640 552 660.0 600.0Q680 648 708 676ZM1664 -128V1024H1280V608Q1280 568 1252.0 540.0Q1224 512 1184 512H768V-128Z"/></svg></span><span class="ic"><svg class="fa" width="15.32" height="16.5" viewBox="0 -1536 1664 1792" style=""><path fill="#fff" transform="scale(1,-1)" d="M1456 320Q1456 360 1428 388L1220 596Q1192 624 1152 624Q1110 624 1080 592Q1083 589 1099.0 573.5Q1115 558 1120.5 552.0Q1126 546 1135.5 533.0Q1145 520 1148.5 507.5Q1152 495 1152 480Q1152 440 1124.0 412.0Q1096 384 1056 384Q1041 384 1028.5 387.5Q1016 391 1003.0 400.5Q990 410 984.0 415.5Q978 421 962.5 437.0Q947 453 944 456Q911 425 911 383Q911 343 939 315L1145 108Q1172 81 1213 81Q1253 81 1281 107L1428 253Q1456 281 1456 320ZM753 1025Q753 1065 725 1093L519 1300Q491 1328 451 1328Q412 1328 383 1301L236 1155Q208 1127 208 1088Q208 1048 236 1020L444 812Q471 785 512 785Q554 785 584 816Q581 819 565.0 834.5Q549 850 543.5 856.0Q538 862 528.5 875.0Q519 888 515.5 900.5Q512 913 512 928Q512 968 540.0 996.0Q568 1024 608 1024Q623 1024 635.5 1020.5Q648 1017 661.0 1007.5Q674 998 680.0 992.5Q686 987 701.5 971.0Q717 955 720 952Q753 983 753 1025ZM1563 117 1416 -29Q1333 -112 1213 -112Q1092 -112 1009 -27L803 180Q720 263 720 383Q720 506 808 592L720 680Q634 592 512 592Q392 592 308 676L100 884Q16 968 16.0 1088.0Q16 1208 101 1291L248 1437Q331 1520 451 1520Q572 1520 655 1435L861 1228Q944 1145 944 1025Q944 902 856 816L944 728Q1030 816 1152 816Q1272 816 1356 732L1564 524Q1648 440 1648.0 320.0Q1648 200 1563 117Z"/></svg></span><span class="ic"><svg class="fa" width="15.32" height="16.5" viewBox="0 -1536 1664 1792" style=""><path fill="#fff" transform="scale(1,-1)" d="M1261.0 147.0Q1280 166 1280.0 192.0Q1280 218 1261.0 237.0Q1242 256 1216.0 256.0Q1190 256 1171.0 237.0Q1152 218 1152.0 192.0Q1152 166 1171.0 147.0Q1190 128 1216.0 128.0Q1242 128 1261.0 147.0ZM1517.0 147.0Q1536 166 1536.0 192.0Q1536 218 1517.0 237.0Q1498 256 1472.0 256.0Q1446 256 1427.0 237.0Q1408 218 1408.0 192.0Q1408 166 1427.0 147.0Q1446 128 1472.0 128.0Q1498 128 1517.0 147.0ZM1664 416V96Q1664 56 1636.0 28.0Q1608 0 1568 0H96Q56 0 28.0 28.0Q0 56 0 96V416Q0 456 28.0 484.0Q56 512 96 512H561L696 376Q754 320 832.0 320.0Q910 320 968 376L1104 512H1568Q1608 512 1636.0 484.0Q1664 456 1664 416ZM1339 985Q1356 944 1325 915L877 467Q859 448 832.0 448.0Q805 448 787 467L339 915Q308 944 325 985Q342 1024 384 1024H640V1472Q640 1498 659.0 1517.0Q678 1536 704 1536H960Q986 1536 1005.0 1517.0Q1024 1498 1024 1472V1024H1280Q1322 1024 1339 985Z"/></svg></span></td></tr>
<tr><td><span class="cb"></span></td><td><svg class="fa" width="17.68" height="16.5" viewBox="0 -1536 1920 1792" style="vertical-align:-2.36px"><path fill="#26b99a" transform="scale(1,-1)" d="M584.0 1096.0Q640 1040 640.0 960.0Q640 880 584.0 824.0Q528 768 448.0 768.0Q368 768 312.0 824.0Q256 880 256.0 960.0Q256 1040 312.0 1096.0Q368 1152 448.0 1152.0Q528 1152 584.0 1096.0ZM1664 576V128H256V320L576 640L736 480L1248 992ZM1760 1280H160Q147 1280 137.5 1270.5Q128 1261 128 1248V32Q128 19 137.5 9.5Q147 0 160 0H1760Q1773 0 1782.5 9.5Q1792 19 1792 32V1248Q1792 1261 1782.5 1270.5Q1773 1280 1760 1280ZM1920 1248V32Q1920 -34 1873.0 -81.0Q1826 -128 1760 -128H160Q94 -128 47.0 -81.0Q0 -34 0 32V1248Q0 1314 47.0 1361.0Q94 1408 160 1408H1760Q1826 1408 1873.0 1361.0Q1920 1314 1920 1248Z"/></svg> ground3.jpg</td><td>55.05 KB</td><td>17.11.22 08:07</td><td><a>0644</a></td><td>root:root</td><td class="act"><span class="ic"><svg class="fa" width="16.50" height="16.5" viewBox="0 -1536 1792 1792" style=""><path fill="#fff" transform="scale(1,-1)" d="M1664 576Q1512 812 1283 929Q1344 825 1344 704Q1344 519 1212.5 387.5Q1081 256 896.0 256.0Q711 256 579.5 387.5Q448 519 448 704Q448 825 509 929Q280 812 128 576Q261 371 461.5 249.5Q662 128 896.0 128.0Q1130 128 1330.5 249.5Q1531 371 1664 576ZM896 1008Q771 1008 681.5 918.5Q592 829 592 704Q592 684 606.0 670.0Q620 656 640.0 656.0Q660 656 674.0 670.0Q688 684 688 704Q688 790 749.0 851.0Q810 912 896 912Q916 912 930.0 926.0Q944 940 944.0 960.0Q944 980 930.0 994.0Q916 1008 896 1008ZM1772 507Q1632 277 1395.5 138.5Q1159 0 896.0 0.0Q633 0 396.5 139.0Q160 278 20 507Q0 542 0.0 576.0Q0 610 20 645Q160 874 396.5 1013.0Q633 1152 896.0 1152.0Q1159 1152 1395.5 1013.0Q1632 874 1772 645Q1792 610 1792.0 576.0Q1792 542 1772 507Z"/></svg></span><span class="ic"><svg class="fa" width="12.96" height="16.5" viewBox="0 -1536 1408 1792" style=""><path fill="#fff" transform="scale(1,-1)" d="M512 800V224Q512 210 503.0 201.0Q494 192 480 192H416Q402 192 393.0 201.0Q384 210 384 224V800Q384 814 393.0 823.0Q402 832 416 832H480Q494 832 503.0 823.0Q512 814 512 800ZM768 800V224Q768 210 759.0 201.0Q750 192 736 192H672Q658 192 649.0 201.0Q640 210 640 224V800Q640 814 649.0 823.0Q658 832 672 832H736Q750 832 759.0 823.0Q768 814 768 800ZM1024 800V224Q1024 210 1015.0 201.0Q1006 192 992 192H928Q914 192 905.0 201.0Q896 210 896 224V800Q896 814 905.0 823.0Q914 832 928 832H992Q1006 832 1015.0 823.0Q1024 814 1024 800ZM1152 76V1024H256V76Q256 54 263.0 35.5Q270 17 277.5 8.5Q285 0 288 0H1120Q1123 0 1130.5 8.5Q1138 17 1145.0 35.5Q1152 54 1152 76ZM480 1152H928L880 1269Q873 1278 863 1280H546Q536 1278 529 1269ZM1408 1120V1056Q1408 1042 1399.0 1033.0Q1390 1024 1376 1024H1280V76Q1280 -7 1233.0 -67.5Q1186 -128 1120 -128H288Q222 -128 175.0 -69.5Q128 -11 128 72V1024H32Q18 1024 9.0 1033.0Q0 1042 0 1056V1120Q0 1134 9.0 1143.0Q18 1152 32 1152H341L411 1319Q426 1356 465.0 1382.0Q504 1408 544 1408H864Q904 1408 943.0 1382.0Q982 1356 997 1319L1067 1152H1376Q1390 1152 1399.0 1143.0Q1408 1134 1408 1120Z"/></svg></span><span class="ic"><svg class="fa" width="16.50" height="16.5" viewBox="0 -1536 1792 1792" style=""><path fill="#fff" transform="scale(1,-1)" d="M888 352 1004 468 852 620 736 504V448H832V352ZM1295 1071 945 721Q928 704 944.0 688.0Q960 672 977 689L1327 1039Q1344 1056 1328.0 1072.0Q1312 1088 1295 1071ZM1408 478V288Q1408 169 1323.5 84.5Q1239 0 1120 0H288Q169 0 84.5 84.5Q0 169 0 288V1120Q0 1239 84.5 1323.5Q169 1408 288 1408H1120Q1183 1408 1237 1383Q1252 1376 1255 1360Q1258 1343 1246 1331L1197 1282Q1183 1268 1165 1274Q1142 1280 1120 1280H288Q222 1280 175.0 1233.0Q128 1186 128 1120V288Q128 222 175.0 175.0Q222 128 288 128H1120Q1186 128 1233.0 175.0Q1280 222 1280 288V414Q1280 427 1289 436L1353 500Q1368 515 1388.0 507.0Q1408 499 1408 478ZM1312 1216 1600 928 928 256H640V544ZM1756 1084 1664 992 1376 1280 1468 1372Q1496 1400 1536.0 1400.0Q1576 1400 1604 1372L1756 1220Q1784 1192 1784.0 1152.0Q1784 1112 1756 1084Z"/></svg></span><span class="ic"><svg class="fa" width="16.50" height="16.5" viewBox="0 -1536 1792 1792" style=""><path fill="#fff" transform="scale(1,-1)" d="M1696 1152Q1736 1152 1764.0 1124.0Q1792 1096 1792 1056V-160Q1792 -200 1764.0 -228.0Q1736 -256 1696 -256H736Q696 -256 668.0 -228.0Q640 -200 640 -160V128H96Q56 128 28.0 156.0Q0 184 0 224V896Q0 936 20.0 984.0Q40 1032 68 1060L476 1468Q504 1496 552.0 1516.0Q600 1536 640 1536H1056Q1096 1536 1124.0 1508.0Q1152 1480 1152 1440V1112Q1220 1152 1280 1152ZM1152 939 853 640H1152ZM512 1323 213 1024H512ZM708 676 1024 992V1408H640V992Q640 952 612.0 924.0Q584 896 544 896H128V256H640V512Q640 552 660.0 600.0Q680 648 708 676ZM1664 -128V1024H1280V608Q1280 568 1252.0 540.0Q1224 512 1184 512H768V-128Z"/></svg></span><span class="ic"><svg class="fa" width="15.32" height="16.5" viewBox="0 -1536 1664 1792" style=""><path fill="#fff" transform="scale(1,-1)" d="M1456 320Q1456 360 1428 388L1220 596Q1192 624 1152 624Q1110 624 1080 592Q1083 589 1099.0 573.5Q1115 558 1120.5 552.0Q1126 546 1135.5 533.0Q1145 520 1148.5 507.5Q1152 495 1152 480Q1152 440 1124.0 412.0Q1096 384 1056 384Q1041 384 1028.5 387.5Q1016 391 1003.0 400.5Q990 410 984.0 415.5Q978 421 962.5 437.0Q947 453 944 456Q911 425 911 383Q911 343 939 315L1145 108Q1172 81 1213 81Q1253 81 1281 107L1428 253Q1456 281 1456 320ZM753 1025Q753 1065 725 1093L519 1300Q491 1328 451 1328Q412 1328 383 1301L236 1155Q208 1127 208 1088Q208 1048 236 1020L444 812Q471 785 512 785Q554 785 584 816Q581 819 565.0 834.5Q549 850 543.5 856.0Q538 862 528.5 875.0Q519 888 515.5 900.5Q512 913 512 928Q512 968 540.0 996.0Q568 1024 608 1024Q623 1024 635.5 1020.5Q648 1017 661.0 1007.5Q674 998 680.0 992.5Q686 987 701.5 971.0Q717 955 720 952Q753 983 753 1025ZM1563 117 1416 -29Q1333 -112 1213 -112Q1092 -112 1009 -27L803 180Q720 263 720 383Q720 506 808 592L720 680Q634 592 512 592Q392 592 308 676L100 884Q16 968 16.0 1088.0Q16 1208 101 1291L248 1437Q331 1520 451 1520Q572 1520 655 1435L861 1228Q944 1145 944 1025Q944 902 856 816L944 728Q1030 816 1152 816Q1272 816 1356 732L1564 524Q1648 440 1648.0 320.0Q1648 200 1563 117Z"/></svg></span><span class="ic"><svg class="fa" width="15.32" height="16.5" viewBox="0 -1536 1664 1792" style=""><path fill="#fff" transform="scale(1,-1)" d="M1261.0 147.0Q1280 166 1280.0 192.0Q1280 218 1261.0 237.0Q1242 256 1216.0 256.0Q1190 256 1171.0 237.0Q1152 218 1152.0 192.0Q1152 166 1171.0 147.0Q1190 128 1216.0 128.0Q1242 128 1261.0 147.0ZM1517.0 147.0Q1536 166 1536.0 192.0Q1536 218 1517.0 237.0Q1498 256 1472.0 256.0Q1446 256 1427.0 237.0Q1408 218 1408.0 192.0Q1408 166 1427.0 147.0Q1446 128 1472.0 128.0Q1498 128 1517.0 147.0ZM1664 416V96Q1664 56 1636.0 28.0Q1608 0 1568 0H96Q56 0 28.0 28.0Q0 56 0 96V416Q0 456 28.0 484.0Q56 512 96 512H561L696 376Q754 320 832.0 320.0Q910 320 968 376L1104 512H1568Q1608 512 1636.0 484.0Q1664 456 1664 416ZM1339 985Q1356 944 1325 915L877 467Q859 448 832.0 448.0Q805 448 787 467L339 915Q308 944 325 985Q342 1024 384 1024H640V1472Q640 1498 659.0 1517.0Q678 1536 704 1536H960Q986 1536 1005.0 1517.0Q1024 1498 1024 1472V1024H1280Q1322 1024 1339 985Z"/></svg></span></td></tr>
<tr><td><span class="cb"></span></td><td><svg class="fa" width="17.68" height="16.5" viewBox="0 -1536 1920 1792" style="vertical-align:-2.36px"><path fill="#26b99a" transform="scale(1,-1)" d="M584.0 1096.0Q640 1040 640.0 960.0Q640 880 584.0 824.0Q528 768 448.0 768.0Q368 768 312.0 824.0Q256 880 256.0 960.0Q256 1040 312.0 1096.0Q368 1152 448.0 1152.0Q528 1152 584.0 1096.0ZM1664 576V128H256V320L576 640L736 480L1248 992ZM1760 1280H160Q147 1280 137.5 1270.5Q128 1261 128 1248V32Q128 19 137.5 9.5Q147 0 160 0H1760Q1773 0 1782.5 9.5Q1792 19 1792 32V1248Q1792 1261 1782.5 1270.5Q1773 1280 1760 1280ZM1920 1248V32Q1920 -34 1873.0 -81.0Q1826 -128 1760 -128H160Q94 -128 47.0 -81.0Q0 -34 0 32V1248Q0 1314 47.0 1361.0Q94 1408 160 1408H1760Q1826 1408 1873.0 1361.0Q1920 1314 1920 1248Z"/></svg> ground4.jpg</td><td>121.57 KB</td><td>17.11.22 08:07</td><td><a>0644</a></td><td>root:root</td><td class="act"><span class="ic"><svg class="fa" width="16.50" height="16.5" viewBox="0 -1536 1792 1792" style=""><path fill="#fff" transform="scale(1,-1)" d="M1664 576Q1512 812 1283 929Q1344 825 1344 704Q1344 519 1212.5 387.5Q1081 256 896.0 256.0Q711 256 579.5 387.5Q448 519 448 704Q448 825 509 929Q280 812 128 576Q261 371 461.5 249.5Q662 128 896.0 128.0Q1130 128 1330.5 249.5Q1531 371 1664 576ZM896 1008Q771 1008 681.5 918.5Q592 829 592 704Q592 684 606.0 670.0Q620 656 640.0 656.0Q660 656 674.0 670.0Q688 684 688 704Q688 790 749.0 851.0Q810 912 896 912Q916 912 930.0 926.0Q944 940 944.0 960.0Q944 980 930.0 994.0Q916 1008 896 1008ZM1772 507Q1632 277 1395.5 138.5Q1159 0 896.0 0.0Q633 0 396.5 139.0Q160 278 20 507Q0 542 0.0 576.0Q0 610 20 645Q160 874 396.5 1013.0Q633 1152 896.0 1152.0Q1159 1152 1395.5 1013.0Q1632 874 1772 645Q1792 610 1792.0 576.0Q1792 542 1772 507Z"/></svg></span><span class="ic"><svg class="fa" width="12.96" height="16.5" viewBox="0 -1536 1408 1792" style=""><path fill="#fff" transform="scale(1,-1)" d="M512 800V224Q512 210 503.0 201.0Q494 192 480 192H416Q402 192 393.0 201.0Q384 210 384 224V800Q384 814 393.0 823.0Q402 832 416 832H480Q494 832 503.0 823.0Q512 814 512 800ZM768 800V224Q768 210 759.0 201.0Q750 192 736 192H672Q658 192 649.0 201.0Q640 210 640 224V800Q640 814 649.0 823.0Q658 832 672 832H736Q750 832 759.0 823.0Q768 814 768 800ZM1024 800V224Q1024 210 1015.0 201.0Q1006 192 992 192H928Q914 192 905.0 201.0Q896 210 896 224V800Q896 814 905.0 823.0Q914 832 928 832H992Q1006 832 1015.0 823.0Q1024 814 1024 800ZM1152 76V1024H256V76Q256 54 263.0 35.5Q270 17 277.5 8.5Q285 0 288 0H1120Q1123 0 1130.5 8.5Q1138 17 1145.0 35.5Q1152 54 1152 76ZM480 1152H928L880 1269Q873 1278 863 1280H546Q536 1278 529 1269ZM1408 1120V1056Q1408 1042 1399.0 1033.0Q1390 1024 1376 1024H1280V76Q1280 -7 1233.0 -67.5Q1186 -128 1120 -128H288Q222 -128 175.0 -69.5Q128 -11 128 72V1024H32Q18 1024 9.0 1033.0Q0 1042 0 1056V1120Q0 1134 9.0 1143.0Q18 1152 32 1152H341L411 1319Q426 1356 465.0 1382.0Q504 1408 544 1408H864Q904 1408 943.0 1382.0Q982 1356 997 1319L1067 1152H1376Q1390 1152 1399.0 1143.0Q1408 1134 1408 1120Z"/></svg></span><span class="ic"><svg class="fa" width="16.50" height="16.5" viewBox="0 -1536 1792 1792" style=""><path fill="#fff" transform="scale(1,-1)" d="M888 352 1004 468 852 620 736 504V448H832V352ZM1295 1071 945 721Q928 704 944.0 688.0Q960 672 977 689L1327 1039Q1344 1056 1328.0 1072.0Q1312 1088 1295 1071ZM1408 478V288Q1408 169 1323.5 84.5Q1239 0 1120 0H288Q169 0 84.5 84.5Q0 169 0 288V1120Q0 1239 84.5 1323.5Q169 1408 288 1408H1120Q1183 1408 1237 1383Q1252 1376 1255 1360Q1258 1343 1246 1331L1197 1282Q1183 1268 1165 1274Q1142 1280 1120 1280H288Q222 1280 175.0 1233.0Q128 1186 128 1120V288Q128 222 175.0 175.0Q222 128 288 128H1120Q1186 128 1233.0 175.0Q1280 222 1280 288V414Q1280 427 1289 436L1353 500Q1368 515 1388.0 507.0Q1408 499 1408 478ZM1312 1216 1600 928 928 256H640V544ZM1756 1084 1664 992 1376 1280 1468 1372Q1496 1400 1536.0 1400.0Q1576 1400 1604 1372L1756 1220Q1784 1192 1784.0 1152.0Q1784 1112 1756 1084Z"/></svg></span><span class="ic"><svg class="fa" width="16.50" height="16.5" viewBox="0 -1536 1792 1792" style=""><path fill="#fff" transform="scale(1,-1)" d="M1696 1152Q1736 1152 1764.0 1124.0Q1792 1096 1792 1056V-160Q1792 -200 1764.0 -228.0Q1736 -256 1696 -256H736Q696 -256 668.0 -228.0Q640 -200 640 -160V128H96Q56 128 28.0 156.0Q0 184 0 224V896Q0 936 20.0 984.0Q40 1032 68 1060L476 1468Q504 1496 552.0 1516.0Q600 1536 640 1536H1056Q1096 1536 1124.0 1508.0Q1152 1480 1152 1440V1112Q1220 1152 1280 1152ZM1152 939 853 640H1152ZM512 1323 213 1024H512ZM708 676 1024 992V1408H640V992Q640 952 612.0 924.0Q584 896 544 896H128V256H640V512Q640 552 660.0 600.0Q680 648 708 676ZM1664 -128V1024H1280V608Q1280 568 1252.0 540.0Q1224 512 1184 512H768V-128Z"/></svg></span><span class="ic"><svg class="fa" width="15.32" height="16.5" viewBox="0 -1536 1664 1792" style=""><path fill="#fff" transform="scale(1,-1)" d="M1456 320Q1456 360 1428 388L1220 596Q1192 624 1152 624Q1110 624 1080 592Q1083 589 1099.0 573.5Q1115 558 1120.5 552.0Q1126 546 1135.5 533.0Q1145 520 1148.5 507.5Q1152 495 1152 480Q1152 440 1124.0 412.0Q1096 384 1056 384Q1041 384 1028.5 387.5Q1016 391 1003.0 400.5Q990 410 984.0 415.5Q978 421 962.5 437.0Q947 453 944 456Q911 425 911 383Q911 343 939 315L1145 108Q1172 81 1213 81Q1253 81 1281 107L1428 253Q1456 281 1456 320ZM753 1025Q753 1065 725 1093L519 1300Q491 1328 451 1328Q412 1328 383 1301L236 1155Q208 1127 208 1088Q208 1048 236 1020L444 812Q471 785 512 785Q554 785 584 816Q581 819 565.0 834.5Q549 850 543.5 856.0Q538 862 528.5 875.0Q519 888 515.5 900.5Q512 913 512 928Q512 968 540.0 996.0Q568 1024 608 1024Q623 1024 635.5 1020.5Q648 1017 661.0 1007.5Q674 998 680.0 992.5Q686 987 701.5 971.0Q717 955 720 952Q753 983 753 1025ZM1563 117 1416 -29Q1333 -112 1213 -112Q1092 -112 1009 -27L803 180Q720 263 720 383Q720 506 808 592L720 680Q634 592 512 592Q392 592 308 676L100 884Q16 968 16.0 1088.0Q16 1208 101 1291L248 1437Q331 1520 451 1520Q572 1520 655 1435L861 1228Q944 1145 944 1025Q944 902 856 816L944 728Q1030 816 1152 816Q1272 816 1356 732L1564 524Q1648 440 1648.0 320.0Q1648 200 1563 117Z"/></svg></span><span class="ic"><svg class="fa" width="15.32" height="16.5" viewBox="0 -1536 1664 1792" style=""><path fill="#fff" transform="scale(1,-1)" d="M1261.0 147.0Q1280 166 1280.0 192.0Q1280 218 1261.0 237.0Q1242 256 1216.0 256.0Q1190 256 1171.0 237.0Q1152 218 1152.0 192.0Q1152 166 1171.0 147.0Q1190 128 1216.0 128.0Q1242 128 1261.0 147.0ZM1517.0 147.0Q1536 166 1536.0 192.0Q1536 218 1517.0 237.0Q1498 256 1472.0 256.0Q1446 256 1427.0 237.0Q1408 218 1408.0 192.0Q1408 166 1427.0 147.0Q1446 128 1472.0 128.0Q1498 128 1517.0 147.0ZM1664 416V96Q1664 56 1636.0 28.0Q1608 0 1568 0H96Q56 0 28.0 28.0Q0 56 0 96V416Q0 456 28.0 484.0Q56 512 96 512H561L696 376Q754 320 832.0 320.0Q910 320 968 376L1104 512H1568Q1608 512 1636.0 484.0Q1664 456 1664 416ZM1339 985Q1356 944 1325 915L877 467Q859 448 832.0 448.0Q805 448 787 467L339 915Q308 944 325 985Q342 1024 384 1024H640V1472Q640 1498 659.0 1517.0Q678 1536 704 1536H960Q986 1536 1005.0 1517.0Q1024 1498 1024 1472V1024H1280Q1322 1024 1339 985Z"/></svg></span></td></tr>
<tr class="r7"><td><span class="cb"></span></td><td><svg class="fa" width="12.96" height="16.5" viewBox="0 -1536 1408 1792" style="vertical-align:-2.36px"><path fill="#d75e72" transform="scale(1,-1)" d="M1130 939 1146 1114H262L309 580H921L899 352L702 299L506 352L493 492H318L340 214L702 114H706V115L1065 214L1115 758H471L456 939ZM0 1408H1408L1280 -30L702 -192L128 -30Z"/></svg> index.html</td><td>6.75 KB</td><td>17.11.22 08:07</td><td><a>0644</a></td><td>root:root</td><td class="act"><span class="ic"><svg class="fa" width="16.50" height="16.5" viewBox="0 -1536 1792 1792" style=""><path fill="#fff" transform="scale(1,-1)" d="M1664 576Q1512 812 1283 929Q1344 825 1344 704Q1344 519 1212.5 387.5Q1081 256 896.0 256.0Q711 256 579.5 387.5Q448 519 448 704Q448 825 509 929Q280 812 128 576Q261 371 461.5 249.5Q662 128 896.0 128.0Q1130 128 1330.5 249.5Q1531 371 1664 576ZM896 1008Q771 1008 681.5 918.5Q592 829 592 704Q592 684 606.0 670.0Q620 656 640.0 656.0Q660 656 674.0 670.0Q688 684 688 704Q688 790 749.0 851.0Q810 912 896 912Q916 912 930.0 926.0Q944 940 944.0 960.0Q944 980 930.0 994.0Q916 1008 896 1008ZM1772 507Q1632 277 1395.5 138.5Q1159 0 896.0 0.0Q633 0 396.5 139.0Q160 278 20 507Q0 542 0.0 576.0Q0 610 20 645Q160 874 396.5 1013.0Q633 1152 896.0 1152.0Q1159 1152 1395.5 1013.0Q1632 874 1772 645Q1792 610 1792.0 576.0Q1792 542 1772 507Z"/></svg></span><span class="ic"><svg class="fa" width="12.96" height="16.5" viewBox="0 -1536 1408 1792" style=""><path fill="#fff" transform="scale(1,-1)" d="M512 800V224Q512 210 503.0 201.0Q494 192 480 192H416Q402 192 393.0 201.0Q384 210 384 224V800Q384 814 393.0 823.0Q402 832 416 832H480Q494 832 503.0 823.0Q512 814 512 800ZM768 800V224Q768 210 759.0 201.0Q750 192 736 192H672Q658 192 649.0 201.0Q640 210 640 224V800Q640 814 649.0 823.0Q658 832 672 832H736Q750 832 759.0 823.0Q768 814 768 800ZM1024 800V224Q1024 210 1015.0 201.0Q1006 192 992 192H928Q914 192 905.0 201.0Q896 210 896 224V800Q896 814 905.0 823.0Q914 832 928 832H992Q1006 832 1015.0 823.0Q1024 814 1024 800ZM1152 76V1024H256V76Q256 54 263.0 35.5Q270 17 277.5 8.5Q285 0 288 0H1120Q1123 0 1130.5 8.5Q1138 17 1145.0 35.5Q1152 54 1152 76ZM480 1152H928L880 1269Q873 1278 863 1280H546Q536 1278 529 1269ZM1408 1120V1056Q1408 1042 1399.0 1033.0Q1390 1024 1376 1024H1280V76Q1280 -7 1233.0 -67.5Q1186 -128 1120 -128H288Q222 -128 175.0 -69.5Q128 -11 128 72V1024H32Q18 1024 9.0 1033.0Q0 1042 0 1056V1120Q0 1134 9.0 1143.0Q18 1152 32 1152H341L411 1319Q426 1356 465.0 1382.0Q504 1408 544 1408H864Q904 1408 943.0 1382.0Q982 1356 997 1319L1067 1152H1376Q1390 1152 1399.0 1143.0Q1408 1134 1408 1120Z"/></svg></span><span class="ic"><svg class="fa" width="16.50" height="16.5" viewBox="0 -1536 1792 1792" style=""><path fill="#fff" transform="scale(1,-1)" d="M888 352 1004 468 852 620 736 504V448H832V352ZM1295 1071 945 721Q928 704 944.0 688.0Q960 672 977 689L1327 1039Q1344 1056 1328.0 1072.0Q1312 1088 1295 1071ZM1408 478V288Q1408 169 1323.5 84.5Q1239 0 1120 0H288Q169 0 84.5 84.5Q0 169 0 288V1120Q0 1239 84.5 1323.5Q169 1408 288 1408H1120Q1183 1408 1237 1383Q1252 1376 1255 1360Q1258 1343 1246 1331L1197 1282Q1183 1268 1165 1274Q1142 1280 1120 1280H288Q222 1280 175.0 1233.0Q128 1186 128 1120V288Q128 222 175.0 175.0Q222 128 288 128H1120Q1186 128 1233.0 175.0Q1280 222 1280 288V414Q1280 427 1289 436L1353 500Q1368 515 1388.0 507.0Q1408 499 1408 478ZM1312 1216 1600 928 928 256H640V544ZM1756 1084 1664 992 1376 1280 1468 1372Q1496 1400 1536.0 1400.0Q1576 1400 1604 1372L1756 1220Q1784 1192 1784.0 1152.0Q1784 1112 1756 1084Z"/></svg></span><span class="ic"><svg class="fa" width="16.50" height="16.5" viewBox="0 -1536 1792 1792" style=""><path fill="#fff" transform="scale(1,-1)" d="M1696 1152Q1736 1152 1764.0 1124.0Q1792 1096 1792 1056V-160Q1792 -200 1764.0 -228.0Q1736 -256 1696 -256H736Q696 -256 668.0 -228.0Q640 -200 640 -160V128H96Q56 128 28.0 156.0Q0 184 0 224V896Q0 936 20.0 984.0Q40 1032 68 1060L476 1468Q504 1496 552.0 1516.0Q600 1536 640 1536H1056Q1096 1536 1124.0 1508.0Q1152 1480 1152 1440V1112Q1220 1152 1280 1152ZM1152 939 853 640H1152ZM512 1323 213 1024H512ZM708 676 1024 992V1408H640V992Q640 952 612.0 924.0Q584 896 544 896H128V256H640V512Q640 552 660.0 600.0Q680 648 708 676ZM1664 -128V1024H1280V608Q1280 568 1252.0 540.0Q1224 512 1184 512H768V-128Z"/></svg></span><span class="ic"><svg class="fa" width="15.32" height="16.5" viewBox="0 -1536 1664 1792" style=""><path fill="#fff" transform="scale(1,-1)" d="M1456 320Q1456 360 1428 388L1220 596Q1192 624 1152 624Q1110 624 1080 592Q1083 589 1099.0 573.5Q1115 558 1120.5 552.0Q1126 546 1135.5 533.0Q1145 520 1148.5 507.5Q1152 495 1152 480Q1152 440 1124.0 412.0Q1096 384 1056 384Q1041 384 1028.5 387.5Q1016 391 1003.0 400.5Q990 410 984.0 415.5Q978 421 962.5 437.0Q947 453 944 456Q911 425 911 383Q911 343 939 315L1145 108Q1172 81 1213 81Q1253 81 1281 107L1428 253Q1456 281 1456 320ZM753 1025Q753 1065 725 1093L519 1300Q491 1328 451 1328Q412 1328 383 1301L236 1155Q208 1127 208 1088Q208 1048 236 1020L444 812Q471 785 512 785Q554 785 584 816Q581 819 565.0 834.5Q549 850 543.5 856.0Q538 862 528.5 875.0Q519 888 515.5 900.5Q512 913 512 928Q512 968 540.0 996.0Q568 1024 608 1024Q623 1024 635.5 1020.5Q648 1017 661.0 1007.5Q674 998 680.0 992.5Q686 987 701.5 971.0Q717 955 720 952Q753 983 753 1025ZM1563 117 1416 -29Q1333 -112 1213 -112Q1092 -112 1009 -27L803 180Q720 263 720 383Q720 506 808 592L720 680Q634 592 512 592Q392 592 308 676L100 884Q16 968 16.0 1088.0Q16 1208 101 1291L248 1437Q331 1520 451 1520Q572 1520 655 1435L861 1228Q944 1145 944 1025Q944 902 856 816L944 728Q1030 816 1152 816Q1272 816 1356 732L1564 524Q1648 440 1648.0 320.0Q1648 200 1563 117Z"/></svg></span><span class="ic"><svg class="fa" width="15.32" height="16.5" viewBox="0 -1536 1664 1792" style=""><path fill="#fff" transform="scale(1,-1)" d="M1261.0 147.0Q1280 166 1280.0 192.0Q1280 218 1261.0 237.0Q1242 256 1216.0 256.0Q1190 256 1171.0 237.0Q1152 218 1152.0 192.0Q1152 166 1171.0 147.0Q1190 128 1216.0 128.0Q1242 128 1261.0 147.0ZM1517.0 147.0Q1536 166 1536.0 192.0Q1536 218 1517.0 237.0Q1498 256 1472.0 256.0Q1446 256 1427.0 237.0Q1408 218 1408.0 192.0Q1408 166 1427.0 147.0Q1446 128 1472.0 128.0Q1498 128 1517.0 147.0ZM1664 416V96Q1664 56 1636.0 28.0Q1608 0 1568 0H96Q56 0 28.0 28.0Q0 56 0 96V416Q0 456 28.0 484.0Q56 512 96 512H561L696 376Q754 320 832.0 320.0Q910 320 968 376L1104 512H1568Q1608 512 1636.0 484.0Q1664 456 1664 416ZM1339 985Q1356 944 1325 915L877 467Q859 448 832.0 448.0Q805 448 787 467L339 915Q308 944 325 985Q342 1024 384 1024H640V1472Q640 1498 659.0 1517.0Q678 1536 704 1536H960Q986 1536 1005.0 1517.0Q1024 1498 1024 1472V1024H1280Q1322 1024 1339 985Z"/></svg></span></td></tr>
</tbody>
<tfoot><tr><td></td><td colspan="6">Full Size: <span class="bdg" style="border-color:#e0452f">1.02 MB</span> File: <span class="bdg" style="border-color:#f5b21b">6</span> Folder: <span class="bdg" style="border-color:#1aa95a">1</span> Memory used: <span class="bdg" style="border-color:#3f7fe8">2 MB</span> Partition size: <span class="bdg" style="border-color:#a555d8">1.1 GB</span> free of <span class="bdg" style="border-color:#2bb3c9">3.84 GB</span></td></tr></tfoot>
</table>
<div class="btn" style="left:17px;width:97px"><svg class="fa" width="13.20" height="15.4" viewBox="0 -1536 1536 1792" style="vertical-align:-2.2px"><path fill="#2388f3" transform="scale(1,-1)" d="M685 237 1299 851Q1318 870 1318.0 896.0Q1318 922 1299 941L1197 1043Q1178 1062 1152.0 1062.0Q1126 1062 1107 1043L640 576L429 787Q410 806 384.0 806.0Q358 806 339 787L237 685Q218 666 218.0 640.0Q218 614 237 595L595 237Q614 218 640.0 218.0Q666 218 685 237ZM1536 1120V160Q1536 41 1451.5 -43.5Q1367 -128 1248 -128H288Q169 -128 84.5 -43.5Q0 41 0 160V1120Q0 1239 84.5 1323.5Q169 1408 288 1408H1248Q1367 1408 1451.5 1323.5Q1536 1239 1536 1120Z"/></svg> Select all</div>
<div class="btn" style="left:127px;width:117px;padding-left:8px"><svg class="fa" width="15.40" height="15.4" viewBox="0 -1536 1792 1792" style="vertical-align:-2.2px"><path fill="#2388f3" transform="scale(1,-1)" d="M1175 215 1321 361Q1331 371 1331.0 384.0Q1331 397 1321 407L1088 640L1321 873Q1331 883 1331.0 896.0Q1331 909 1321 919L1175 1065Q1165 1075 1152.0 1075.0Q1139 1075 1129 1065L896 832L663 1065Q653 1075 640.0 1075.0Q627 1075 617 1065L471 919Q461 909 461.0 896.0Q461 883 471 873L704 640L471 407Q461 397 461.0 384.0Q461 371 471 361L617 215Q627 205 640.0 205.0Q653 205 663 215L896 448L1129 215Q1139 205 1152.0 205.0Q1165 205 1175 215ZM1792 1248V32Q1792 -34 1745.0 -81.0Q1698 -128 1632 -128H160Q94 -128 47.0 -81.0Q0 -34 0 32V1248Q0 1314 47.0 1361.0Q94 1408 160 1408H1632Q1698 1408 1745.0 1361.0Q1792 1314 1792 1248Z"/></svg> Unselect all</div>
<div class="btn" style="left:258px;width:143px"><svg class="fa" width="15.40" height="15.4" viewBox="0 -1536 1792 1792" style="vertical-align:-2.2px"><path fill="#2388f3" transform="scale(1,-1)" d="M512 288V96Q512 56 484.0 28.0Q456 0 416 0H96Q56 0 28.0 28.0Q0 56 0 96V288Q0 328 28.0 356.0Q56 384 96 384H416Q456 384 484.0 356.0Q512 328 512 288ZM512 800V608Q512 568 484.0 540.0Q456 512 416 512H96Q56 512 28.0 540.0Q0 568 0 608V800Q0 840 28.0 868.0Q56 896 96 896H416Q456 896 484.0 868.0Q512 840 512 800ZM1792 288V96Q1792 56 1764.0 28.0Q1736 0 1696 0H736Q696 0 668.0 28.0Q640 56 640 96V288Q640 328 668.0 356.0Q696 384 736 384H1696Q1736 384 1764.0 356.0Q1792 328 1792 288ZM512 1312V1120Q512 1080 484.0 1052.0Q456 1024 416 1024H96Q56 1024 28.0 1052.0Q0 1080 0 1120V1312Q0 1352 28.0 1380.0Q56 1408 96 1408H416Q456 1408 484.0 1380.0Q512 1352 512 1312ZM1792 800V608Q1792 568 1764.0 540.0Q1736 512 1696 512H736Q696 512 668.0 540.0Q640 568 640 608V800Q640 840 668.0 868.0Q696 896 736 896H1696Q1736 896 1764.0 868.0Q1792 840 1792 800ZM1792 1312V1120Q1792 1080 1764.0 1052.0Q1736 1024 1696 1024H736Q696 1024 668.0 1052.0Q640 1080 640 1120V1312Q640 1352 668.0 1380.0Q696 1408 736 1408H1696Q1736 1408 1764.0 1380.0Q1792 1352 1792 1312Z"/></svg> Invert Selection</div>
<div class="btn" style="left:415px;width:79px"><svg class="fa" width="12.10" height="15.4" viewBox="0 -1536 1408 1792" style="vertical-align:-2.2px"><path fill="#2388f3" transform="scale(1,-1)" d="M512 160V864Q512 878 503.0 887.0Q494 896 480 896H416Q402 896 393.0 887.0Q384 878 384 864V160Q384 146 393.0 137.0Q402 128 416 128H480Q494 128 503.0 137.0Q512 146 512 160ZM768 160V864Q768 878 759.0 887.0Q750 896 736 896H672Q658 896 649.0 887.0Q640 878 640 864V160Q640 146 649.0 137.0Q658 128 672 128H736Q750 128 759.0 137.0Q768 146 768 160ZM1024 160V864Q1024 878 1015.0 887.0Q1006 896 992 896H928Q914 896 905.0 887.0Q896 878 896 864V160Q896 146 905.0 137.0Q914 128 928 128H992Q1006 128 1015.0 137.0Q1024 146 1024 160ZM480 1152H928L880 1269Q873 1278 863 1280H546Q536 1278 529 1269ZM1408 1120V1056Q1408 1042 1399.0 1033.0Q1390 1024 1376 1024H1280V76Q1280 -7 1233.0 -67.5Q1186 -128 1120 -128H288Q222 -128 175.0 -69.5Q128 -11 128 72V1024H32Q18 1024 9.0 1033.0Q0 1042 0 1056V1120Q0 1134 9.0 1143.0Q18 1152 32 1152H341L411 1319Q426 1356 465.0 1382.0Q504 1408 544 1408H864Q904 1408 943.0 1382.0Q982 1356 997 1319L1067 1152H1376Q1390 1152 1399.0 1143.0Q1408 1134 1408 1120Z"/></svg> Delete</div>
<div class="btn" style="left:508px;width:55px"><svg class="fa" width="13.20" height="15.4" viewBox="0 -1536 1536 1792" style="vertical-align:-2.2px"><path fill="#2388f3" transform="scale(1,-1)" d="M640 1152V1280H512V1152ZM768 1024V1152H640V1024ZM640 896V1024H512V896ZM768 768V896H640V768ZM1468 1156Q1496 1128 1516.0 1080.0Q1536 1032 1536 992V-160Q1536 -200 1508.0 -228.0Q1480 -256 1440 -256H96Q56 -256 28.0 -228.0Q0 -200 0 -160V1440Q0 1480 28.0 1508.0Q56 1536 96 1536H992Q1032 1536 1080.0 1516.0Q1128 1496 1156 1468ZM1024 1400V1024H1400Q1390 1053 1378 1065L1065 1378Q1053 1390 1024 1400ZM1408 -128V896H992Q952 896 924.0 924.0Q896 952 896 992V1408H768V1280H640V1408H128V-128ZM781 593 888 244Q896 217 896 192Q896 109 823.5 54.5Q751 0 640.0 0.0Q529 0 456.5 54.5Q384 109 384 192Q384 217 392 244Q413 307 512 640V768H640V640H719Q741 640 758.0 627.0Q775 614 781 593ZM549.5 147.0Q587 128 640.0 128.0Q693 128 730.5 147.0Q768 166 768.0 192.0Q768 218 730.5 237.0Q693 256 640.0 256.0Q587 256 549.5 237.0Q512 218 512.0 192.0Q512 166 549.5 147.0Z"/></svg> Zip</div>
<div class="btn" style="left:577px;width:56px"><svg class="fa" width="13.20" height="15.4" viewBox="0 -1536 1536 1792" style="vertical-align:-2.2px"><path fill="#2388f3" transform="scale(1,-1)" d="M640 1152V1280H512V1152ZM768 1024V1152H640V1024ZM640 896V1024H512V896ZM768 768V896H640V768ZM1468 1156Q1496 1128 1516.0 1080.0Q1536 1032 1536 992V-160Q1536 -200 1508.0 -228.0Q1480 -256 1440 -256H96Q56 -256 28.0 -228.0Q0 -200 0 -160V1440Q0 1480 28.0 1508.0Q56 1536 96 1536H992Q1032 1536 1080.0 1516.0Q1128 1496 1156 1468ZM1024 1400V1024H1400Q1390 1053 1378 1065L1065 1378Q1053 1390 1024 1400ZM1408 -128V896H992Q952 896 924.0 924.0Q896 952 896 992V1408H768V1280H640V1408H128V-128ZM781 593 888 244Q896 217 896 192Q896 109 823.5 54.5Q751 0 640.0 0.0Q529 0 456.5 54.5Q384 109 384 192Q384 217 392 244Q413 307 512 640V768H640V640H719Q741 640 758.0 627.0Q775 614 781 593ZM549.5 147.0Q587 128 640.0 128.0Q693 128 730.5 147.0Q768 166 768.0 192.0Q768 218 730.5 237.0Q693 256 640.0 256.0Q587 256 549.5 237.0Q512 218 512.0 192.0Q512 166 549.5 147.0Z"/></svg> Tar</div>
<div class="btn" style="left:647px;width:73px"><svg class="fa" width="15.40" height="15.4" viewBox="0 -1536 1792 1792" style="vertical-align:-2.2px"><path fill="#2388f3" transform="scale(1,-1)" d="M1696 1152Q1736 1152 1764.0 1124.0Q1792 1096 1792 1056V-160Q1792 -200 1764.0 -228.0Q1736 -256 1696 -256H736Q696 -256 668.0 -228.0Q640 -200 640 -160V128H96Q56 128 28.0 156.0Q0 184 0 224V896Q0 936 20.0 984.0Q40 1032 68 1060L476 1468Q504 1496 552.0 1516.0Q600 1536 640 1536H1056Q1096 1536 1124.0 1508.0Q1152 1480 1152 1440V1112Q1220 1152 1280 1152ZM1152 939 853 640H1152ZM512 1323 213 1024H512ZM708 676 1024 992V1408H640V992Q640 952 612.0 924.0Q584 896 544 896H128V256H640V512Q640 552 660.0 600.0Q680 648 708 676ZM1664 -128V1024H1280V608Q1280 568 1252.0 540.0Q1224 512 1184 512H768V-128Z"/></svg> Copy</div>
<div id="ver">Tiny File Manager 2.4.3</div>
</body>
</html>
